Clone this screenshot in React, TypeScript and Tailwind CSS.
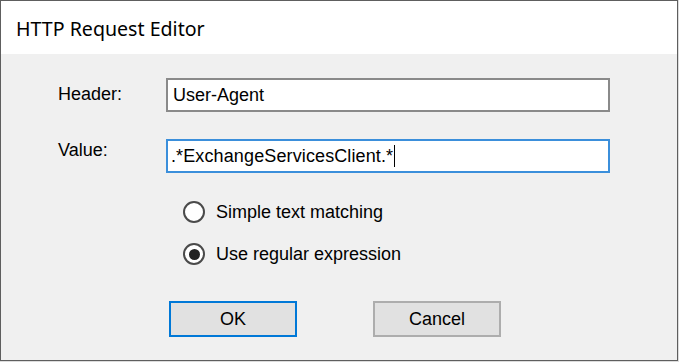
import React from "react";

const body = { fontFamily: '"Liberation Sans", Arial, sans-serif' };

function Radio({ checked, label }: { checked?: boolean; label: string }) {
  return (
    <div className="flex items-center h-[22px]">
      <div className="w-[22px] h-[22px] rounded-full border-2 border-[#4a4a4a] bg-white flex items-center justify-center">
        {checked && <div className="w-[11px] h-[11px] rounded-full bg-[#222]" />}
      </div>
      <span className="ml-[11px] text-[18px] leading-[20px] text-black">{label}</span>
    </div>
  );
}

export default function App() {
  return (
    <div className="w-[679px] h-[362px] bg-[#dcdcdc]" style={body}>
      <div className="w-[678px] h-[361px] border border-[#5e5e5e] flex flex-col bg-[#f0f0f0]">
        <div className="h-[53px] bg-white flex items-center pl-[15px]">
          <span className="text-[19.6px] text-black pt-[2px]" style={{ fontFamily: '"Noto Sans", "Open Sans", sans-serif' }}>
            HTTP Request Editor
          </span>
        </div>
        <div className="flex-1 flex flex-col pl-[57px] pt-[24px]">
          <div className="flex items-start">
            <span className="w-[108px] pt-[6px] text-[18px] leading-[20px] text-black">Header:</span>
            <div className="w-[444px] h-[34px] border-2 border-[#8a8a8a] bg-white flex items-center pl-[5px]">
              <span className="text-[18px] leading-[20px] text-black">User-Agent</span>
            </div>
          </div>
          <div className="flex items-start mt-[27px]">
            <span className="w-[108px] pt-[1px] text-[18px] leading-[20px] text-black">Value:</span>
            <div className="w-[444px] h-[34px] border-2 border-[#3b8fdb] bg-white flex items-center pl-[3px]">
              <span className="text-[18px] leading-[20px] text-black tracking-[0.12px]">.*ExchangeServicesClient.*</span>
              <span className="w-px h-[22px] bg-black ml-[1px]" />
            </div>
          </div>
          <div className="flex flex-col pl-[125px] mt-[28px] gap-[20px]">
            <Radio label="Simple text matching" />
            <Radio checked label="Use regular expression" />
          </div>
          <div className="flex pl-[111px] mt-[36px] gap-[76px]">
            <div className="w-[128px] h-[36px] border-2 border-[#0078d7] bg-[#e1e1e1] flex items-center justify-center text-[18px] leading-[20px] text-black">
              OK
            </div>
            <div className="w-[128px] h-[36px] border-2 border-[#adadad] bg-[#e1e1e1] flex items-center justify-center text-[18px] leading-[20px] text-black">
              Cancel
            </div>
          </div>
        </div>
      </div>
    </div>
  );
}
